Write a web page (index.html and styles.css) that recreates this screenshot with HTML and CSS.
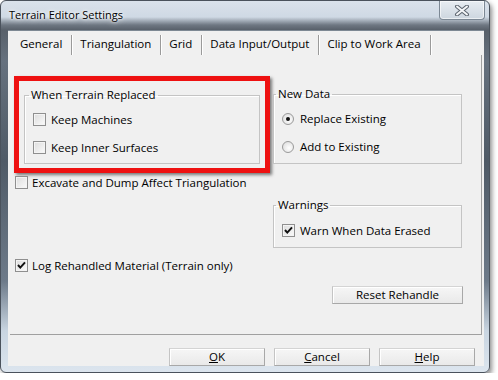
FILE: index.html
```html
<!DOCTYPE html>
<html lang="en">
<head>
    <meta charset="UTF-8">
    <title>Terrain Editor Settings</title>
    <link rel="stylesheet" href="styles.css">
</head>
<body>
    <div class="window">
        <div class="titlebar">
            <span class="title">Terrain Editor Settings</span>
            <div class="close-btn">
                <svg width="16" height="11" viewBox="0 0 16 11">
                    <path d="M3 1.5 L13 9.5 M13 1.5 L3 9.5" stroke="#5d6670" stroke-width="4" stroke-linecap="round"/>
                    <path d="M3 1.5 L13 9.5 M13 1.5 L3 9.5" stroke="#f4f6f8" stroke-width="2" stroke-linecap="round"/>
                </svg>
            </div>
        </div>

        <div class="client">
            <div class="tabs">
                <span class="tab">General</span>
                <span class="tab">Triangulation</span>
                <span class="tab">Grid</span>
                <span class="tab">Data Input/Output</span>
                <span class="tab">Clip to Work Area</span>
            </div>

            <div class="page">
                <div class="col-left">
                    <div class="highlight">
                        <fieldset class="group group-replaced">
                            <legend>When Terrain Replaced</legend>
                            <label class="check-row"><span class="checkbox"></span>Keep Machines</label>
                            <label class="check-row"><span class="checkbox"></span>Keep Inner Surfaces</label>
                        </fieldset>
                    </div>
                    <label class="check-row row-excavate"><span class="checkbox"></span>Excavate and Dump Affect Triangulation</label>
                    <label class="check-row row-log"><span class="checkbox checked"><svg width="11" height="11" viewBox="0 0 11 11"><path d="M2 5 L4.3 7.6 L9 2.4" fill="none" stroke="#111" stroke-width="2"/></svg></span>Log Rehandled Material (Terrain only)</label>
                </div>

                <div class="col-right">
                    <fieldset class="group group-newdata">
                        <legend>New Data</legend>
                        <label class="check-row"><span class="radio checked"></span>Replace Existing</label>
                        <label class="check-row"><span class="radio"></span>Add to Existing</label>
                    </fieldset>
                    <fieldset class="group group-warnings">
                        <legend>Warnings</legend>
                        <label class="check-row"><span class="checkbox checked"><svg width="11" height="11" viewBox="0 0 11 11"><path d="M2 5 L4.3 7.6 L9 2.4" fill="none" stroke="#111" stroke-width="2"/></svg></span>Warn When Data Erased</label>
                    </fieldset>
                    <button type="button" class="btn btn-reset">Reset Rehandle</button>
                </div>
            </div>

            <div class="buttons">
                <button type="button" class="btn"><u>O</u>K</button>
                <button type="button" class="btn"><u>C</u>ancel</button>
                <button type="button" class="btn"><u>H</u>elp</button>
            </div>
        </div>
    </div>
</body>
</html>
```

FILE: styles.css
```css
body {
    margin: 0;
    background: #fff;
    font-family: "Open Sans", "Liberation Sans", sans-serif;
    font-size: 11.5px;
    color: #000;
}

.window {
    width: 490px;
    height: 373px;
    box-sizing: border-box;
    border: 1px solid #4a525c;
    border-radius: 6px;
    background: linear-gradient(to bottom, #dae2eb 0px, #cfd9e4 16px, #6e7782 24px, #58606a 29px, #66717e 60px, #4f5a66 160px, #6d7a89 280px, #c9d5e1 330px, #dde6ef 373px);
    box-shadow: 2px 3px 5px rgba(0, 0, 0, 0.45);
    overflow: hidden;
}

.titlebar {
    height: 29px;
    display: flex;
    justify-content: space-between;
    align-items: flex-start;
}

.title {
    padding: 6px 0 0 8px;
    font-size: 11px;
    text-shadow: 0 0 6px #fff, 0 0 3px #fff;
}

.close-btn {
    width: 46px;
    height: 19px;
    margin-right: 4px;
    box-sizing: border-box;
    border: 1px solid #7c8894;
    border-top: none;
    border-radius: 0 0 4px 4px;
    background: linear-gradient(to bottom, #e8edf2, #cdd6df);
    box-shadow: inset 0 0 0 1px rgba(255, 255, 255, 0.6);
    display: flex;
    align-items: center;
    justify-content: center;
}

.client {
    margin-left: 7px;
    width: 476px;
    height: 336px;
    background: #f0f0f0;
    border-top: 1px solid #7d8893;
    box-sizing: border-box;
}

.tabs {
    display: flex;
    height: 24px;
    padding: 4px 0 0 4px;
    box-sizing: border-box;
}

.tab {
    padding: 0 9px 0 8px;
    font-size: 11.5px;
    line-height: 18px;
    border-right: 1px solid #9a9a9a;
    box-shadow: 1px 0 0 #fff;
}

.page {
    margin-left: 2px;
    width: 472px;
    height: 280px;
    box-sizing: border-box;
    border-right: 1px solid #a0a0a0;
    border-bottom: 1px solid #a0a0a0;
    padding: 21px 0 0 4px;
    display: flex;
}

.col-left {
    width: 256px;
    display: flex;
    flex-direction: column;
}

.col-right {
    width: 189px;
    margin-left: 3px;
    display: flex;
    flex-direction: column;
}

.highlight {
    height: 97px;
    box-sizing: border-box;
    border: 5px solid #ee1111;
    box-shadow: 2px 2px 3px rgba(0, 0, 0, 0.5);
    padding: 7px 5px 0 5px;
}

.group {
    margin: 0;
    box-sizing: border-box;
    border: 1px solid #c4c4c4;
    box-shadow: inset 1px 1px 0 #fff;
    padding: 11px 0 0 8px;
    display: flex;
    flex-direction: column;
    gap: 15px;
}

.group legend {
    padding: 0 2px;
    margin-left: -4px;
    font-size: 11.5px;
    line-height: 14px;
}

.group-replaced {
    height: 76px;
}

.group-newdata {
    height: 77px;
    margin-top: 11px;
}

.group-newdata legend {
    margin-left: -6px;
}

.group-warnings {
    height: 50px;
    margin-top: 34px;
    padding-top: 12px;
}

.group-warnings legend {
    margin-left: -6px;
}

.check-row {
    display: flex;
    align-items: center;
    gap: 5px;
    height: 13px;
    font-size: 11.5px;
    white-space: nowrap;
}

.row-excavate {
    margin: 3px 0 0 1px;
    gap: 4px;
}

.row-log {
    margin: 70px 0 0 1px;
    gap: 4px;
}

.checkbox {
    width: 13px;
    height: 13px;
    box-sizing: border-box;
    border: 1px solid #8f8f8f;
    background: linear-gradient(135deg, #dcdcdc, #fbfbfb);
    box-shadow: inset 0 0 0 1px #f4f4f4;
    display: flex;
    align-items: center;
    justify-content: center;
    flex: none;
}

.radio {
    width: 12px;
    height: 12px;
    box-sizing: border-box;
    border: 1px solid #9a9a9a;
    border-radius: 50%;
    background: radial-gradient(circle at 60% 60%, #fff, #d8d8d8);
    display: flex;
    align-items: center;
    justify-content: center;
    flex: none;
    margin-right: 1px;
}

.radio.checked::after {
    content: "";
    width: 4px;
    height: 4px;
    border-radius: 50%;
    background: #111;
}

.btn {
    width: 96px;
    height: 18px;
    padding: 0;
    font-family: inherit;
    font-size: 11.5px;
    line-height: 16px;
    color: #000;
    border: 1px solid #a8a8a8;
    border-top-color: #d4d4d4;
    border-left-color: #c4c4c4;
    background: linear-gradient(to bottom, #f6f6f6, #e9e9e9);
    box-shadow: inset 1px 1px 0 #fff;
}

.btn-reset {
    width: 131px;
    margin: 38px 0 0 59px;
}

.buttons {
    display: flex;
    justify-content: flex-end;
    gap: 9px;
    padding: 13px 9px 0 0;
}
```
